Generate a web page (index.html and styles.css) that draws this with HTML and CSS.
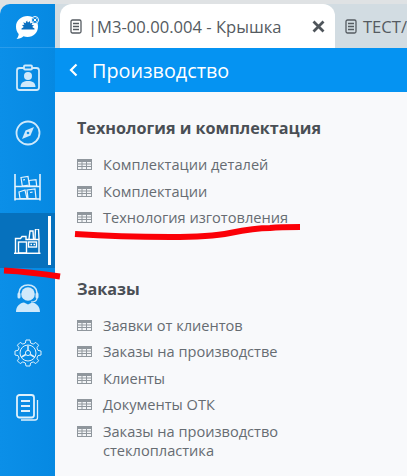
FILE: index.html
```html
<!DOCTYPE html>
<html lang="ru">

<head>
    <meta charset="UTF-8">
    <title>Производство</title>
    <link rel="stylesheet" href="styles.css">
</head>

<body>
    <div class="app">
        <aside class="sidebar">
            <div class="logo">
                <svg width="28" height="28" viewBox="0 0 28 28">
                    <path d="M12.500 4C18.500 4 23 8.500 23 14.500S18.500 25 12.500 25c-1.500 0-2.800-.3-4-.8C6.500 26 4 27 1.500 27c1.300-1.200 2-2.800 2.200-5C2 20 1 17.500 1 14.500 1 8.500 6.500 4 12.500 4z" fill="#fff" />
                    <path d="M12.500 8l.8 2.600 1.700-1.600.2 2.500 2.600-1-1.200 2.500 2.400.2-1.800 1.800 2.300 1.500v1H6.500v-1l2.300-1.500L7 13l2.400-.2L8.200 10.300l2.600 1 .2-2.500 1.700 1.600z" fill="#0b6fc0" />
                    <circle cx="20" cy="8" r="3.500" fill="#0b86dc" stroke="#fff" stroke-width="1" />
                    <path d="M18.500 6.500l3 3m0-3l-3 3" stroke="#fff" stroke-width="1" />
                </svg>
            </div>
            <a class="nav-item">
                <svg width="26" height="28" viewBox="0 0 26 28" fill="none" stroke="#cfe9fb" stroke-width="1.800">
                    <rect x="2" y="4" width="22" height="22" rx="2.500" />
                    <rect x="9" y="1.500" width="8" height="4" rx="1" fill="#0b8fe8" />
                    <circle cx="13" cy="12" r="4" fill="#cfe9fb" stroke="none" />
                    <path d="M5.500 23c0-4.500 3.500-6 7.500-6s7.500 1.500 7.500 6z" fill="#cfe9fb" stroke="none" />
                </svg>
            </a>
            <a class="nav-item">
                <svg width="26" height="26" viewBox="0 0 26 26" fill="none" stroke="#cfe9fb" stroke-width="1.800">
                    <circle cx="13" cy="13" r="11.500" />
                    <path d="M19 7l-3.500 8.500L7 19l3.500-8.500z" fill="#cfe9fb" stroke="none" />
                    <circle cx="13" cy="13" r="1.300" fill="#0b8fe8" stroke="none" />
                </svg>
            </a>
            <a class="nav-item">
                <svg width="27" height="27" viewBox="0 0 27 27" fill="none" stroke="#e4f3fd" stroke-width="1.200">
                    <path d="M1 0v26.500M26 0v26.500M1 12.500h25M1 25h25" stroke-width="1.600" />
                    <path d="M7 3.500l7-1 1.300 8.500-7 1zM15 6.500l7-.8.700 6.300h-7z" />
                    <path d="M5 18l6-2 2 8.500H6zM13 16l8-1 1 9.500h-8z" />
                    <path d="M9 6l2-.3M16 18.500l2.500-.3" />
                </svg>
            </a>
            <a class="nav-item active">
                <svg width="27" height="25" viewBox="0 0 27 25" fill="none" stroke="#fff" stroke-width="1.400">
                    <path d="M0 24.300h26.500" stroke-width="1.500" />
                    <path d="M1.500 24V9.500h5L8 7.500h4v3h13v13.500" />
                    <path d="M15 10l1-8h3l.5 8M21 10l.5-10h3l.5 10" />
                    <rect x="4.500" y="13" width="8" height="11" />
                    <rect x="14.500" y="13" width="8" height="5" />
                    <path d="M16.500 15.500h1.500M19.500 15.500h1.500" />
                </svg>
            </a>
            <a class="nav-item">
                <svg width="26" height="28" viewBox="0 0 26 28">
                    <circle cx="13" cy="10" r="6.800" fill="#cfe9fb" />
                    <path d="M4 11V9c0-5 4-8 9-8s9 3 9 8v2" fill="none" stroke="#cfe9fb" stroke-width="1.600" />
                    <rect x="2.500" y="8.500" width="3" height="6" rx="1.500" fill="#cfe9fb" />
                    <rect x="20.500" y="8.500" width="3" height="6" rx="1.500" fill="#cfe9fb" />
                    <path d="M22 14c0 2-2 4-6 4" fill="none" stroke="#cfe9fb" stroke-width="1.200" />
                    <path d="M1 28c0-6 4-9 8-9.500l4 2 4-2c4 .5 8 3.500 8 9.500z" fill="#cfe9fb" />
                </svg>
            </a>
            <a class="nav-item">
                <svg width="28" height="28" viewBox="0 0 28 28" fill="none" stroke="#dff1fc" stroke-width="1">
                    <path d="M12 1h4l.6 3 2.600 1.100 2.600-1.700 2.800 2.800-1.700 2.600L24 11.400l3 .6v4l-3 .6-1.100 2.600 1.700 2.600-2.800 2.800-2.600-1.700-2.600 1.100-.6 3h-4l-.6-3-2.600-1.100-2.600 1.700-2.800-2.800 1.700-2.600L4 16.600 1 16v-4l3-.6 1.100-2.600-1.700-2.600 2.800-2.800 2.600 1.700L11.400 4z" />
                    <circle cx="14" cy="14" r="8" />
                    <circle cx="14" cy="14" r="2.600" />
                    <path d="M14 6.500v5M7.500 18l4.300-2.500M20.500 18l-4.300-2.500" stroke-width="1.500" />
                </svg>
            </a>
            <a class="nav-item">
                <svg width="23" height="27" viewBox="0 0 23 27" fill="none" stroke="#dff1fc" stroke-width="1.800">
                    <rect x="1" y="1" width="17" height="22.500" rx="2.500" />
                    <path d="M5 7h9M5 12h9M5 17h9" />
                    <path d="M21.500 6v17.500c0 1.500-1 2.500-2.500 2.500H5" stroke-width="1.300" />
                </svg>
            </a>
        </aside>

        <div class="main">
            <div class="tabs">
                <div class="tab tab-current">
                    <svg class="doc-icon" width="12" height="15" viewBox="0 0 12 15" fill="none" stroke="#555b61" stroke-width="1.300">
                        <rect x="1" y="1" width="10" height="13" rx="1.500" />
                        <path d="M3 4.500h6M3 7.500h6M3 10.500h6" />
                    </svg>
                    <span class="tab-title">|М3-00.00.004 - Крышка</span>
                    <svg class="tab-close" width="13" height="13" viewBox="0 0 13 13">
                        <path d="M1.500 1.500l10 10m0-10l-10 10" stroke="#4f555b" stroke-width="2.800" />
                    </svg>
                </div>
                <div class="tab">
                    <svg class="doc-icon" width="12" height="15" viewBox="0 0 12 15" fill="none" stroke="#555b61" stroke-width="1.300">
                        <rect x="1" y="1" width="10" height="13" rx="1.500" />
                        <path d="M3 4.500h6M3 7.500h6M3 10.500h6" />
                    </svg>
                    <span class="tab-title">ТЕСТ/</span>
                </div>
            </div>

            <header class="page-header">
                <svg width="9" height="14" viewBox="0 0 9 14" fill="none" stroke="#fff" stroke-width="2.200">
                    <path d="M7.500 1.500L2 7l5.500 5.500" />
                </svg>
                <span>Производство</span>
            </header>

            <div class="content">
                <section class="group">
                    <h2>Технология и комплектация</h2>
                    <ul>
                        <li><svg class="grid-icon"><use href="#grid" /></svg>Комплектации деталей</li>
                        <li><svg class="grid-icon"><use href="#grid" /></svg>Комплектации</li>
                        <li><svg class="grid-icon"><use href="#grid" /></svg>Технология изготовления</li>
                    </ul>
                </section>
                <section class="group">
                    <h2>Заказы</h2>
                    <ul>
                        <li><svg class="grid-icon"><use href="#grid" /></svg>Заявки от клиентов</li>
                        <li><svg class="grid-icon"><use href="#grid" /></svg>Заказы на производстве</li>
                        <li><svg class="grid-icon"><use href="#grid" /></svg>Клиенты</li>
                        <li><svg class="grid-icon"><use href="#grid" /></svg>Документы ОТК</li>
                        <li><svg class="grid-icon"><use href="#grid" /></svg>Заказы на производство стеклопластика</li>
                    </ul>
                </section>
            </div>
        </div>
    </div>

    <!-- red marker strokes drawn over the screenshot -->
    <svg class="marks" width="407" height="476" viewBox="0 0 407 476" fill="none" stroke="#fb0007" stroke-width="6">
        <path d="M75 234c30 2 65 3 95 3 25 0 45-1 60-4 15-3 25-5 40-5 10-1 20-1 30-1" />
        <path d="M4 270.500c20 1 37 3 56 6" />
    </svg>

    <svg width="0" height="0" class="defs">
        <symbol id="grid" viewBox="0 0 15 11">
            <path d="M0 0h15v11H0z" fill="#90979d" />
            <path d="M1 3h3.500v1.500H1zM5.500 3H9v1.500H5.500zM10 3h4v1.500h-4zM1 5.500h3.500V7H1zM5.500 5.500H9V7H5.500zM10 5.500h4V7h-4zM1 8h3.500v2H1zM5.500 8H9v2H5.500zM10 8h4v2h-4z" fill="#f3f5f7" />
        </symbol>
    </svg>
</body>

</html>
```

FILE: styles.css
```css
html, body {
    margin: 0;
    height: 100%;
    overflow: hidden;
}

body {
    background-color: #dfe2e4;
    font-family: "Open Sans", "Noto Sans", sans-serif;
    position: relative;
}

.app {
    display: flex;
    height: 476px;
    padding-top: 4px;
    box-sizing: border-box;
}

.sidebar {
    width: 55px;
    flex-shrink: 0;
    display: flex;
    flex-direction: column;
    background: linear-gradient(90deg, #0b8fe8, #0689e2);
    border-top-left-radius: 10px;
}

.logo {
    height: 44px;
    box-sizing: border-box;
    display: flex;
    align-items: center;
    justify-content: center;
    border-bottom: 1px solid #2a9ceb;
    padding-left: 3px;
}

.nav-item {
    height: 55px;
    display: flex;
    align-items: center;
    justify-content: center;
    padding-top: 4px;
    box-sizing: border-box;
}

.active {
    background-color: #0671bd;
    position: relative;
    padding-top: 2px;
}

.active::after {
    content: "";
    position: absolute;
    right: 4px;
    top: 3px;
    bottom: 3px;
    width: 3px;
    background-color: #fff;
}

.main {
    flex: 1;
    min-width: 0;
    display: flex;
    flex-direction: column;
}

.tabs {
    height: 44px;
    flex-shrink: 0;
    display: flex;
    background-color: #d2dce2;
    padding-left: 5px;
}

.tab {
    display: flex;
    align-items: center;
    padding-left: 10px;
    white-space: nowrap;
    color: #555b61;
    font-size: 16.600px;
}

.tab-current {
    width: 275px;
    box-sizing: border-box;
    background-color: #fff;
    border-radius: 12px 12px 0 0;
    padding-right: 10px;
}

.doc-icon {
    flex-shrink: 0;
    margin-right: 6px;
}

.tab-title {
    flex: 1;
}

.page-header {
    height: 44px;
    flex-shrink: 0;
    display: flex;
    align-items: center;
    gap: 14px;
    padding-left: 14px;
    background-color: #0593f2;
    color: #fff;
    font-size: 19.800px;
}

.content {
    flex: 1;
    min-height: 0;
    overflow: hidden;
    background-color: #f8f9fb;
    padding: 26px 22px 0;
    color: #666c72;
}

.group {
    margin-bottom: 51.500px;
}

.group h2 {
    margin: 0 0 17px;
    font-size: 16.200px;
    line-height: 20px;
    font-weight: 700;
    color: #4a4f55;
}

.group ul {
    list-style: none;
    margin: 0;
    padding: 0;
}

.group li {
    position: relative;
    max-width: 220px;
    padding-left: 26px;
    margin-bottom: 7.500px;
    font-size: 14.600px;
    line-height: 19px;
}

.grid-icon {
    position: absolute;
    left: 0;
    top: 4px;
    width: 15px;
    height: 11px;
}

.marks {
    position: absolute;
    left: 0;
    top: 0;
    pointer-events: none;
}

.defs {
    position: absolute;
}
```
